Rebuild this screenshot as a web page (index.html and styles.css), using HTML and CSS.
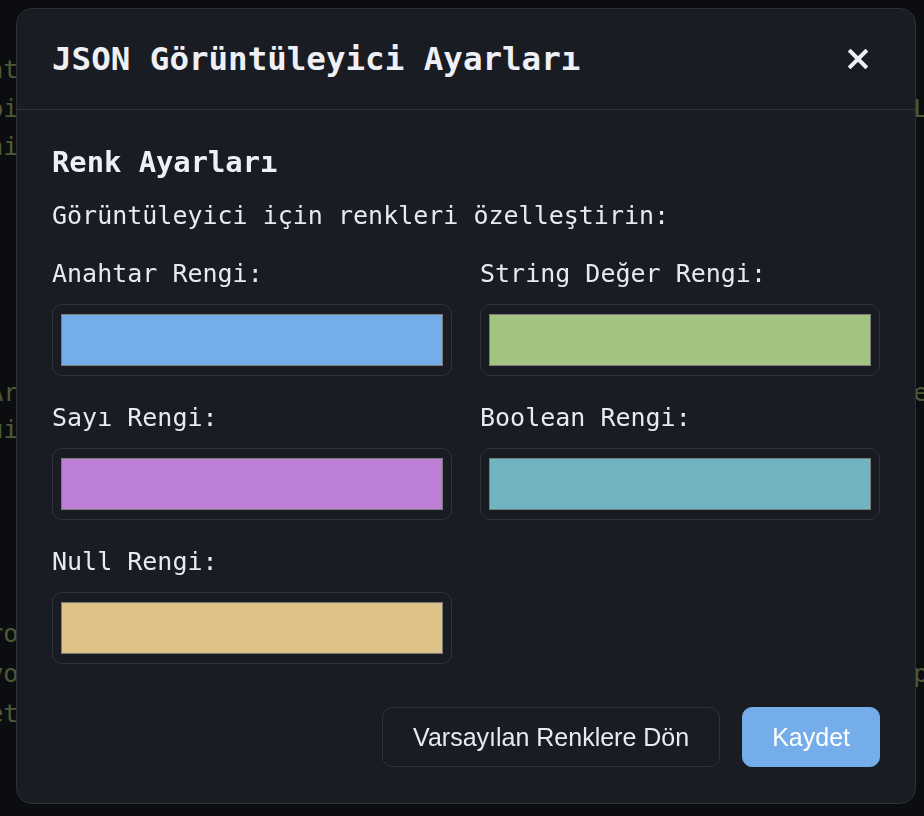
FILE: index.html
```html
<!DOCTYPE html>
<html lang="tr">
<head>
<meta charset="utf-8">
<title>JSON Görüntüleyici Ayarları</title>
<link rel="stylesheet" href="styles.css">
</head>
<body>
<div class="backdrop">
  <pre class="code code-a">int  "input": "Lorem ipsum",
api  "desc": "Lorem ipsum dolor sit amet, consectetur quis do Lorem ipsum"
ini  "nitelik": "değer",</pre>
  <pre class="code code-b"> Ar  "desc": "Lorem ipsum dolor sit amet, consectetur quis do elit"
qui  "quiet": true,</pre>
  <pre class="code code-c">pro  "proje": "json",
syo  "desc": "Lorem ipsum dolor sit amet, consectetur quis do password"
bet  "beta": false</pre>
</div>
<div class="overlay">
  <div class="modal">
    <div class="modal-header">
      <h2 class="modal-title">JSON Görüntüleyici Ayarları</h2>
      <button class="close-btn" aria-label="Kapat">
        <svg width="20" height="20" viewBox="0 0 20 20"><path d="M2.5 2.5 L17.5 17.5 M17.5 2.5 L2.5 17.5" stroke="#eceef4" stroke-width="4" stroke-linecap="square" fill="none"/></svg>
      </button>
    </div>
    <div class="modal-body">
      <h3 class="section-title">Renk Ayarları</h3>
      <p class="section-desc">Görüntüleyici için renkleri özelleştirin:</p>
      <div class="color-grid">
        <div class="field">
          <label class="field-label">Anahtar Rengi:</label>
          <div class="color-input"><div class="swatch swatch-key"></div></div>
        </div>
        <div class="field">
          <label class="field-label">String Değer Rengi:</label>
          <div class="color-input"><div class="swatch swatch-string"></div></div>
        </div>
        <div class="field">
          <label class="field-label">Sayı Rengi:</label>
          <div class="color-input"><div class="swatch swatch-number"></div></div>
        </div>
        <div class="field">
          <label class="field-label">Boolean Rengi:</label>
          <div class="color-input"><div class="swatch swatch-bool"></div></div>
        </div>
        <div class="field">
          <label class="field-label">Null Rengi:</label>
          <div class="color-input"><div class="swatch swatch-null"></div></div>
        </div>
      </div>
      <div class="actions">
        <button class="btn btn-secondary">Varsayılan Renklere Dön</button>
        <button class="btn btn-primary">Kaydet</button>
      </div>
    </div>
  </div>
</div>
</body>
</html>
```

FILE: styles.css
```css
html, body {
  margin: 0;
  padding: 0;
  width: 924px;
  height: 816px;
  overflow: hidden;
  background: #0c0d10;
}

.backdrop {
  display: flex;
  flex-direction: column;
  width: 1100px;
  margin-left: -27px;
}

.code {
  margin: 0;
  font-family: "DejaVu Sans Mono", monospace;
  font-size: 25.2px;
  color: #4d5939;
  white-space: pre;
}

.code-a {
  margin-top: 51px;
  line-height: 38.5px;
}

.code-b {
  margin-top: 207px;
  line-height: 37px;
}

.code-c {
  margin-top: 166px;
  line-height: 40px;
}

.overlay {
  position: fixed;
  inset: 0;
  display: flex;
  align-items: flex-start;
  justify-content: flex-start;
  padding: 8px 0 0 16px;
}

.modal {
  width: 900px;
  height: 796px;
  box-sizing: border-box;
  background: #1a1c23;
  border: 1px solid #2e3139;
  border-radius: 16px;
  display: flex;
  flex-direction: column;
  color: #e8eaf0;
}

.modal-header {
  height: 101px;
  box-sizing: border-box;
  border-bottom: 1px solid #30333b;
  display: flex;
  align-items: center;
  justify-content: space-between;
  padding: 0 35px 0 35px;
}

.modal-title {
  margin: 0;
  font-family: "DejaVu Sans Mono", monospace;
  font-weight: bold;
  font-size: 32.5px;
  color: #eef0f5;
}

.close-btn {
  width: 44px;
  height: 44px;
  padding: 0;
  border: none;
  background: transparent;
  display: flex;
  align-items: center;
  justify-content: center;
  cursor: pointer;
}

.modal-body {
  padding: 35px 35px 0 35px;
  display: flex;
  flex-direction: column;
}

.section-title {
  margin: 0;
  font-family: "DejaVu Sans Mono", monospace;
  font-weight: bold;
  font-size: 28.8px;
  line-height: 35px;
  color: #eef0f5;
}

.section-desc {
  margin: 21px 0 0 0;
  font-family: "DejaVu Sans Mono", monospace;
  font-size: 25px;
  line-height: 30px;
  color: #e8eaf0;
}

.color-grid {
  margin-top: 28px;
  display: grid;
  grid-template-columns: 400px 400px;
  column-gap: 28px;
  row-gap: 27px;
}

.field {
  display: flex;
  flex-direction: column;
  gap: 15px;
}

.field-label {
  font-family: "DejaVu Sans Mono", monospace;
  font-size: 25px;
  line-height: 30px;
  color: #e8eaf0;
}

.color-input {
  height: 72px;
  box-sizing: border-box;
  border: 1px solid #30333b;
  border-radius: 10px;
  padding: 9px 8px;
}

.swatch {
  height: 100%;
  box-sizing: border-box;
  border: 1px solid #7a7a7a;
}

.swatch-key { background: #75adeb; }
.swatch-string { background: #a3c383; }
.swatch-number { background: #bb7fd6; }
.swatch-bool { background: #70b4c1; }
.swatch-null { background: #dfc287; }

.actions {
  margin-top: 43px;
  display: flex;
  justify-content: flex-end;
  gap: 22px;
}

.btn {
  height: 60px;
  box-sizing: border-box;
  border-radius: 10px;
  font-family: "Liberation Sans", Arial, sans-serif;
  font-size: 25px;
  padding: 0 29px;
  cursor: pointer;
}

.btn-secondary {
  background: #1a1c23;
  border: 1px solid #30333b;
  color: #e8eaf0;
  padding: 0 30px;
}

.btn-primary {
  background: #74ade9;
  border: 1px solid #74ade9;
  color: #ffffff;
}
```
